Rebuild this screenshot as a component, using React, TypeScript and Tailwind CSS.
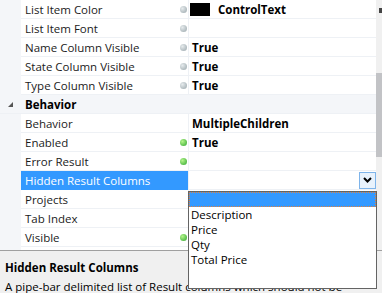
import React from 'react';

type Row = {
  label: string;
  value?: string;
  dot?: 'gray' | 'green';
  swatch?: boolean;
  selected?: boolean;
  combo?: boolean;
};

const topRows: Row[] = [
  { label: 'List Item Color', value: 'ControlText', dot: 'gray', swatch: true },
  { label: 'List Item Font', dot: 'gray' },
  { label: 'Name Column Visible', value: 'True', dot: 'gray' },
  { label: 'State Column Visible', value: 'True', dot: 'gray' },
  { label: 'Type Column Visible', value: 'True', dot: 'gray' },
];

const behaviorRows: Row[] = [
  { label: 'Behavior', value: 'MultipleChildren' },
  { label: 'Enabled', value: 'True', dot: 'green' },
  { label: 'Error Result', dot: 'green' },
  { label: 'Hidden Result Columns', selected: true, combo: true },
  { label: 'Projects' },
  { label: 'Tab Index' },
  { label: 'Visible', dot: 'green' },
  { label: 'Format' },
];

const columns = ['Description', 'Price', 'Qty', 'Total Price'];

const Dot = ({ kind }: { kind: 'gray' | 'green' }) =>
  kind === 'gray' ? (
    <span className="w-[7px] h-[7px] rounded-full bg-[radial-gradient(circle_at_35%_35%,#e6ebed,#98a5aa)]" />
  ) : (
    <span className="w-[7px] h-[7px] rounded-full bg-[radial-gradient(circle_at_35%_35%,#b4f58a,#2fa52f)]" />
  );

const PropRow = ({ row }: { row: Row }) => (
  <div className="flex h-[19px] shrink-0">
    <div className="w-[21px] bg-[#f4f6f9]" />
    <div
      className={
        row.selected
          ? 'w-[167px] flex items-center justify-between pl-[4px] pr-[1px] bg-[#3399ff] text-white border-b border-[#3399ff]'
          : 'w-[167px] flex items-center justify-between pl-[4px] pr-[1px] text-[#1b1b1b] border-b border-[#eef1f5]'
      }
    >
      <span className="whitespace-nowrap">{row.label}</span>
      {row.dot && <Dot kind={row.dot} />}
    </div>
    <div className="w-[1px] bg-[#eef1f5]" />
    <div className="flex-1 flex items-center border-b border-[#eef1f5] font-bold text-black">
      {row.swatch && <span className="ml-[1px] w-[20px] h-[13px] bg-black mr-[8px]" />}
      {row.value && <span className={row.swatch ? 'whitespace-nowrap' : 'pl-[3px] whitespace-nowrap'}>{row.value}</span>}
      {row.combo && (
        <span className="ml-auto w-[17px] h-[17px] border border-[#7eb4ea] bg-[#e8f2fc] flex items-center justify-center">
          <svg width="9" height="6" viewBox="0 0 9 6">
            <path d="M1 1 L4.5 4.5 L8 1" stroke="#000" strokeWidth="2" fill="none" />
          </svg>
        </span>
      )}
    </div>
  </div>
);

export default function App() {
  return (
    <div className="relative w-[382px] h-[293px] overflow-hidden bg-white font-['Open_Sans',sans-serif] text-[11.5px] leading-[19px]">
      <div className="flex h-[250px] overflow-hidden">
        <div className="flex-1 flex flex-col">
          {topRows.map((r) => (
            <PropRow key={r.label} row={r} />
          ))}
          <div className="flex h-[19px] shrink-0 bg-[#f4f6f9] border-b border-[#eef1f5]">
            <div className="w-[21px] flex items-center justify-center">
              <svg width="5" height="5" viewBox="0 0 5 5">
                <polygon points="5,0 5,5 0,5" fill="#555" />
              </svg>
            </div>
            <span className="pl-[4px] font-bold text-black flex items-center">Behavior</span>
          </div>
          {behaviorRows.map((r) => (
            <PropRow key={r.label} row={r} />
          ))}
        </div>
        <div className="w-[6px] bg-[#f0f0f0] flex flex-col">
          <div className="mt-[8px] ml-[3px] w-[3px] h-[5px] bg-[#444]" />
          <div className="mt-[60px] h-[84px] bg-[#c2c3c6]" />
        </div>
      </div>
      <div className="h-[1px] bg-[#a0a0a0]" />
      <div className="h-[42px] bg-[#f0f0f0] px-[5px] pt-[7px]">
        <div className="font-bold text-black whitespace-nowrap leading-[19px]">Hidden Result Columns</div>
        <div className="text-black whitespace-nowrap leading-[19px]">
          A pipe-bar delimited list of Result columns which should not be
        </div>
      </div>

      {/* combo dropdown list */}
      <div className="absolute left-[188px] top-[191px] w-[189px] h-[98px] bg-white border border-[#646464] leading-[15px]">
        <div className="h-[15px] bg-[#3399ff] outline outline-1 outline-dotted outline-[#e0803a] -outline-offset-1" />
        {columns.map((c) => (
          <div key={c} className="h-[15px] pl-[2px] text-black whitespace-nowrap">
            {c}
          </div>
        ))}
      </div>
    </div>
  );
}
